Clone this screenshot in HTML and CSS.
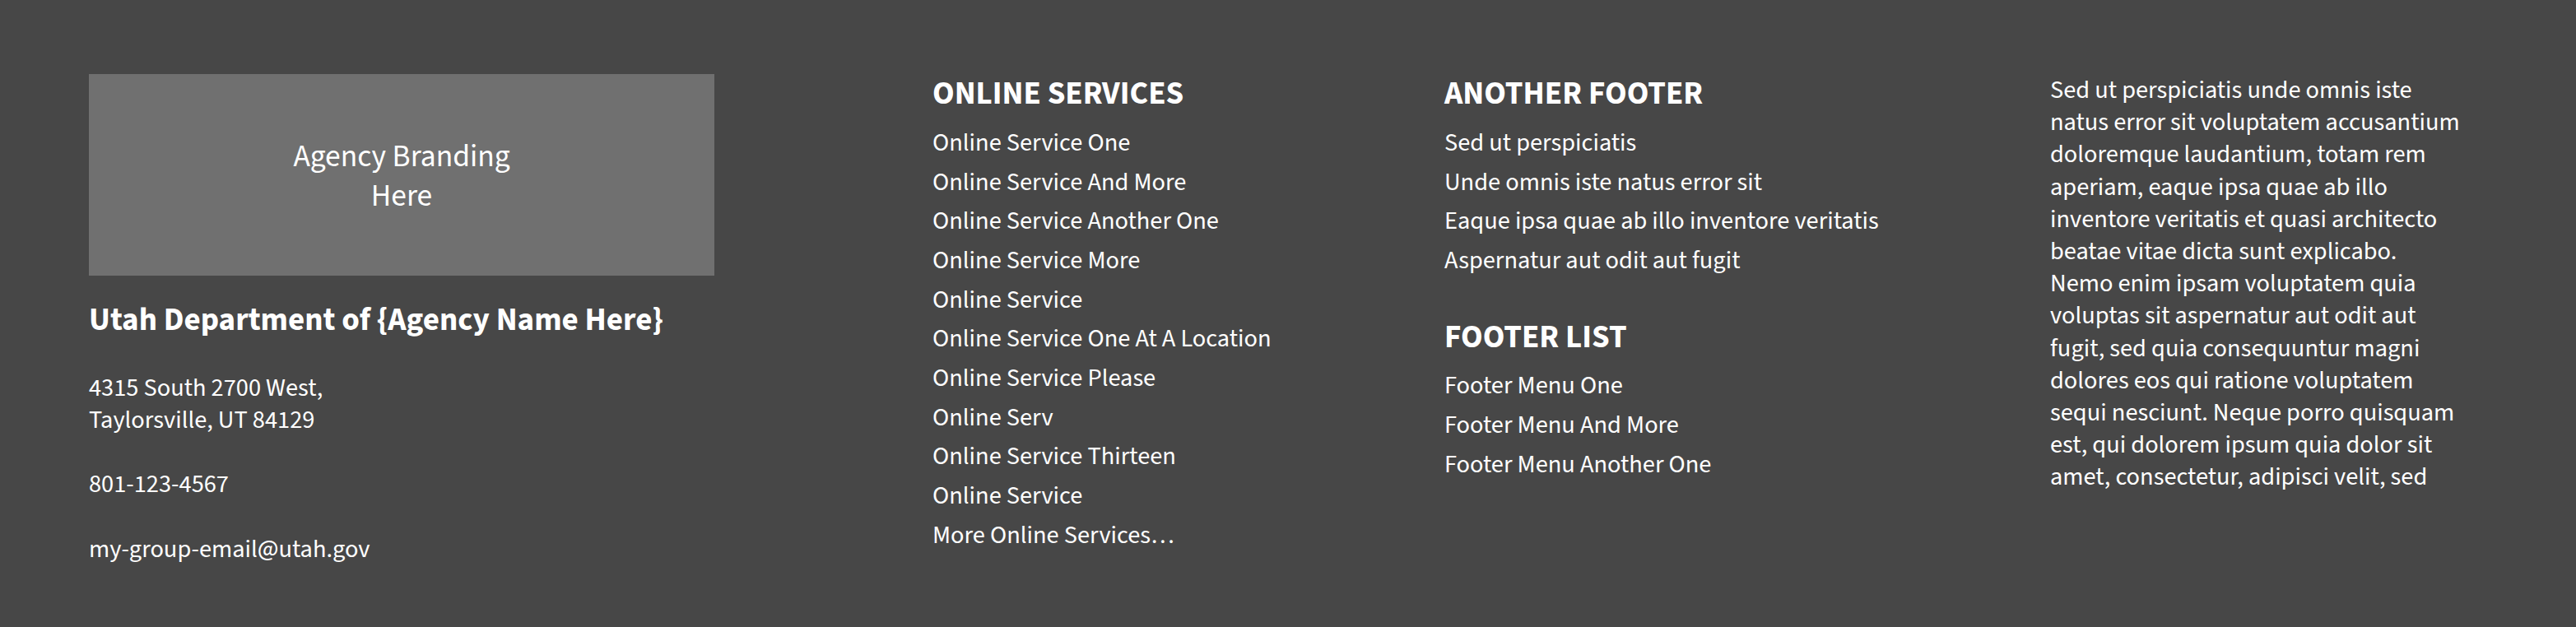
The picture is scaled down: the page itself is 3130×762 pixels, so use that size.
FILE: index.html
```html
<!DOCTYPE html>
<html lang="en">
<head>
<meta charset="utf-8">
<title>Footer</title>
<link rel="stylesheet" href="styles.css">
</head>
<body>
<footer class="site-footer">
  <div class="footer-col agency">
    <div class="branding">Agency Branding<br>Here</div>
    <h2 class="agency-name">Utah Department of {Agency Name Here}</h2>
    <p class="contact">4315 South 2700 West,<br>Taylorsville, UT 84129</p>
    <p class="contact">801-123-4567</p>
    <p class="contact">my-group-email@utah.gov</p>
  </div>
  <div class="footer-col">
    <h3 class="footer-heading">ONLINE SERVICES</h3>
    <ul class="footer-links">
      <li><a href="#">Online Service One</a></li>
      <li><a href="#">Online Service And More</a></li>
      <li><a href="#">Online Service Another One</a></li>
      <li><a href="#">Online Service More</a></li>
      <li><a href="#">Online Service</a></li>
      <li><a href="#">Online Service One At A Location</a></li>
      <li><a href="#">Online Service Please</a></li>
      <li><a href="#">Online Serv</a></li>
      <li><a href="#">Online Service Thirteen</a></li>
      <li><a href="#">Online Service</a></li>
      <li><a href="#">More Online Services…</a></li>
    </ul>
  </div>
  <div class="footer-col">
    <h3 class="footer-heading">ANOTHER FOOTER</h3>
    <ul class="footer-links">
      <li><a href="#">Sed ut perspiciatis</a></li>
      <li><a href="#">Unde omnis iste natus error sit</a></li>
      <li><a href="#">Eaque ipsa quae ab illo inventore veritatis</a></li>
      <li><a href="#">Aspernatur aut odit aut fugit</a></li>
    </ul>
    <h3 class="footer-heading second">FOOTER LIST</h3>
    <ul class="footer-links">
      <li><a href="#">Footer Menu One</a></li>
      <li><a href="#">Footer Menu And More</a></li>
      <li><a href="#">Footer Menu Another One</a></li>
    </ul>
  </div>
  <div class="footer-col">
    <p class="footer-text">Sed ut perspiciatis unde omnis iste natus error sit voluptatem accusantium doloremque laudantium, totam rem aperiam, eaque ipsa quae ab illo inventore veritatis et quasi architecto beatae vitae dicta sunt explicabo. Nemo enim ipsam voluptatem quia voluptas sit aspernatur aut odit aut fugit, sed quia consequuntur magni dolores eos qui ratione voluptatem sequi nesciunt. Neque porro quisquam est, qui dolorem ipsum quia dolor sit amet, consectetur, adipisci velit, sed</p>
  </div>
</footer>
</body>
</html>
```
FILE: styles.css
```css
html, body {
  margin: 0;
  padding: 0;
  background: #474747;
}

body {
  font-family: "Source Sans 3", "Source Sans Pro", "Open Sans", sans-serif;
  color: #ffffff;
}

.site-footer {
  box-sizing: border-box;
  min-height: 762px;
  padding: 90px 108px 60px;
  display: grid;
  grid-template-columns: 1025px 622px 736px 1fr;
  align-items: start;
}

.footer-col {
  display: flex;
  flex-direction: column;
  align-items: flex-start;
}

.branding {
  box-sizing: border-box;
  width: 760px;
  height: 245px;
  padding-top: 5px;
  background: #707070;
  display: flex;
  align-items: center;
  justify-content: center;
  text-align: center;
  font-size: 37.5px;
  line-height: 48px;
}

.agency-name {
  margin: 31px 0 0;
  font-size: 39px;
  font-weight: 700;
  line-height: 46.8px;
}

.contact {
  margin: 39.2px 0 0;
  font-size: 30.4px;
  line-height: 39.2px;
}

.agency-name + .contact {
  margin-top: 39px;
}

.footer-heading {
  margin: 1px 0 12px;
  font-size: 39px;
  font-weight: 700;
  line-height: 46.8px;
}

.footer-heading.second {
  margin-top: 46px;
}

.footer-links {
  list-style: none;
  margin: 0;
  padding: 0;
}

.footer-links li {
  font-size: 30.4px;
  line-height: 47.7px;
}

.footer-links a {
  color: #ffffff;
  text-decoration: none;
}

.footer-text {
  margin: 0;
  max-width: 500px;
  font-size: 30.4px;
  line-height: 39.2px;
}
```
